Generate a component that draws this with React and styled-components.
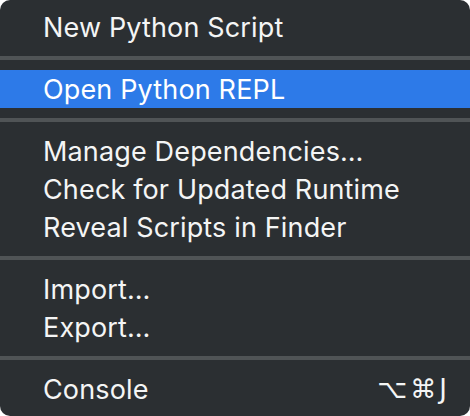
import styled, { createGlobalStyle } from "styled-components";

const GlobalStyle = createGlobalStyle`
  html, body {
    margin: 0;
    padding: 0;
    background: #ffffff;
  }
`;

export const MenuBox = styled.div`
  width: 470px;
  height: 416px;
  box-sizing: border-box;
  padding: 8px 0;
  background: #2b2f32;
  border-radius: 10px;
  display: flex;
  flex-direction: column;
  font-family: Inter, "Liberation Sans", sans-serif;
  color: #f4f5f5;
  overflow: hidden;
`;

export const MenuItem = styled.div`
  height: 38px;
  flex-shrink: 0;
  display: flex;
  flex-direction: row;
  justify-content: space-between;
  align-items: center;
  padding: 0 23px 0 43px;
  font-size: 27px;
  letter-spacing: 0.15px;
  background: ${(p) => (p.$active ? "#2d7ae8" : "transparent")};
  color: ${(p) => (p.$active ? "#ffffff" : "#f4f5f5")};
`;

export const Separator = styled.div`
  height: 4px;
  margin: 10px 0;
  flex-shrink: 0;
  background: #505456;
`;

export const Shortcut = styled.span`
  font-family: "DejaVu Sans", sans-serif;
  font-size: 26px;
  letter-spacing: 3px;
  margin-right: -3px;
`;

const groups = [
  [{ label: "New Python Script" }],
  [{ label: "Open Python REPL", active: true }],
  [
    { label: "Manage Dependencies…" },
    { label: "Check for Updated Runtime" },
    { label: "Reveal Scripts in Finder" },
  ],
  [{ label: "Import…" }, { label: "Export…" }],
  [{ label: "Console", shortcut: "⌥⌘J" }],
];

const App = () => {
  return (
    <>
      <GlobalStyle />
      <MenuBox>
        {groups.map((group, gi) => (
          <div key={gi} style={{ display: "contents" }}>
            {gi > 0 && <Separator />}
            {group.map((item) => (
              <MenuItem key={item.label} $active={item.active}>
                <span>{item.label}</span>
                {item.shortcut && <Shortcut>{item.shortcut}</Shortcut>}
              </MenuItem>
            ))}
          </div>
        ))}
      </MenuBox>
    </>
  );
};

export default App;
